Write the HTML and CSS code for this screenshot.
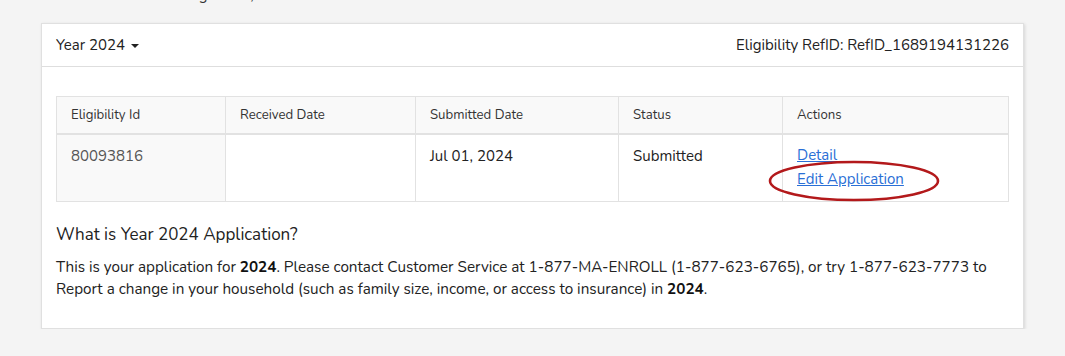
FILE: index.html
```html
<!DOCTYPE html>
<html>
<head>
<meta charset="utf-8">
<link rel="stylesheet" href="styles.css">
</head>
<body>
<div class="page">
  <div class="renewal">Next Renewal Date: August 18, 2024</div>
  <div class="panel">
    <div class="panel-head">
      <div class="year">Year 2024 <span class="caret"></span></div>
      <div class="refid">Eligibility RefID: RefID_1689194131226</div>
    </div>
    <div class="panel-body">
      <table class="grid">
        <thead>
          <tr>
            <th class="c1">Eligibility Id</th>
            <th class="c2">Received Date</th>
            <th class="c3">Submitted Date</th>
            <th class="c4">Status</th>
            <th class="c5">Actions</th>
          </tr>
        </thead>
        <tbody>
          <tr>
            <td class="idcell">80093816</td>
            <td></td>
            <td class="dark">Jul 01, 2024</td>
            <td class="dark">Submitted</td>
            <td class="actions">
              <div class="links">
                <a href="#">Detail</a>
                <span class="circled"><a href="#">Edit Application</a>
                  <svg class="ring" width="172" height="42" viewBox="0 0 172 42"><ellipse cx="86" cy="21" rx="84" ry="19" fill="none" stroke="#b3191b" stroke-width="2.6"/></svg>
                </span>
              </div>
            </td>
          </tr>
        </tbody>
      </table>
      <h3 class="title">What is Year 2024 Application?</h3>
      <p class="desc">This is your application for <b>2024</b>. Please contact Customer Service at 1-877-MA-ENROLL (1-877-623-6765), or try 1-877-623-7773 to Report a change in your household (such as family size, income, or access to insurance) in <b>2024</b>.</p>
    </div>
  </div>
</div>
</body>
</html>
```

FILE: styles.css
```css
html, body {
  margin: 0;
  padding: 0;
  background: #f4f4f4;
}
body {
  font-family: "Nunito", "Lato", "Open Sans", sans-serif;
  color: #222;
  font-size: 15.25px;
}
.page {
  padding: 0 41px;
  margin-top: -16px;
}
.renewal {
  height: 39px;
  line-height: 22px;
  font-size: 15px;
  color: #333;
}
.panel {
  background: #fff;
  border: 1px solid #e0e0e0;
  box-shadow: 1px 1px 3px rgba(0,0,0,0.12);
  height: 306px;
  box-sizing: border-box;
}
.panel-head {
  display: flex;
  justify-content: space-between;
  align-items: center;
  height: 42px;
  padding: 0 14px;
  border-bottom: 1px solid #dedede;
  font-size: 15px;
  color: #222;
}
.caret {
  display: inline-block;
  width: 0;
  height: 0;
  border-left: 4px solid transparent;
  border-right: 4px solid transparent;
  border-top: 4px solid #222;
  vertical-align: middle;
  margin-left: 2px;
}
.panel-body {
  padding: 29px 14px 0;
}
.grid {
  width: 100%;
  border-collapse: collapse;
  border: 1px solid #e2e2e2;
}
.grid th {
  background: #f9f9f9;
  font-weight: normal;
  font-size: 13.2px;
  color: #333;
  text-align: left;
  height: 36px;
  padding: 0 14px;
  border: 1px solid #e2e2e2;
  border-bottom: 2px solid #e2e2e2;
}
.grid td {
  vertical-align: top;
  padding: 11px 14px 0;
  height: 55px;
  border: 1px solid #e2e2e2;
  font-size: 15px;
  color: #555;
  line-height: 20px;
}
.grid td.dark { color: #222; }
.grid td.idcell { background: #f9f9f9; }
.c1 { width: 140px; }
.c2 { width: 161px; }
.c3 { width: 174px; }
.c4 { width: 135px; }
.links {
  margin-top: -3px;
}
.actions a {
  display: block;
  color: #2a6fd6;
  text-decoration: underline;
  line-height: 24px;
}
.circled {
  position: relative;
  display: block;
}
.ring {
  position: absolute;
  left: -29px;
  top: -7px;
  pointer-events: none;
}
.title {
  font-size: 17px;
  font-weight: normal;
  margin: 22px 0 10px;
  color: #222;
  line-height: 22px;
}
.desc {
  margin: 0;
  line-height: 22px;
  color: #222;
}
.desc b { font-weight: 700; color: #111; }
```
